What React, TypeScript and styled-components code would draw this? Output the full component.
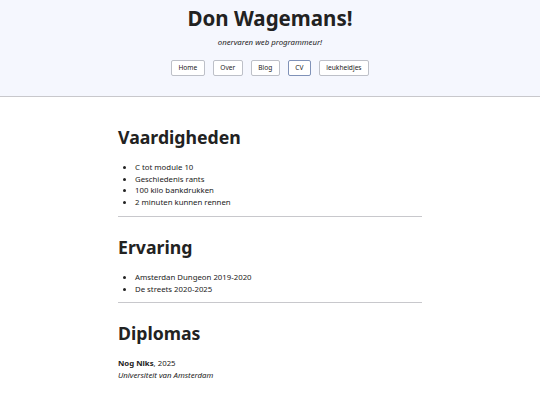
import React from "react";
import styled, { createGlobalStyle } from "styled-components";

const Global = createGlobalStyle`
  body {
    margin: 0;
    background: #ffffff;
    color: #222222;
    font-family: "Noto Sans", "DejaVu Sans", sans-serif;
  }
`;

const Header = styled.header`
  background: #f5f7fe;
  border-bottom: 1px solid #c8c8cc;
  text-align: center;
  padding: 3px 0 20px;
`;

const Title = styled.h1`
  margin: 0;
  font-size: 20.5px;
  font-weight: 700;
  line-height: 30px;
`;

const Subtitle = styled.p`
  margin: 3px 0 0;
  font-size: 7.8px;
  font-style: italic;
  line-height: 12px;
`;

const Nav = styled.nav`
  display: flex;
  justify-content: center;
  gap: 8px;
  margin-top: 12px;
`;

const NavButton = styled.a<{ $active?: boolean }>`
  display: inline-block;
  font-size: 6.6px;
  line-height: 14px;
  padding: 0 6.5px;
  border: 1px solid ${(p) => (p.$active ? "#8092b8" : "#bdc0c8")};
  border-radius: 2px;
  background: #ffffff;
  color: #222222;
  text-decoration: none;
`;

const Main = styled.main`
  max-width: 304px;
  margin: 0 auto;
  padding-top: 27px;
`;

const Heading = styled.h2`
  margin: 0;
  font-size: 17.7px;
  font-weight: 700;
  line-height: 26px;
`;

const List = styled.ul`
  margin: 12px 0 7px;
  padding-left: 17px;
  font-size: 7.8px;
  line-height: 11.7px;
`;

const Rule = styled.hr`
  border: 0;
  border-top: 1px solid #c8c8cc;
  margin: 0 0 17px;
`;

const Diploma = styled.div`
  margin-top: 12px;
  font-size: 7.8px;
  line-height: 11.7px;
`;

const School = styled.div`
  font-style: italic;
`;

const links = ["Home", "Over", "Blog", "CV", "leukheidjes"];

export default function App() {
  return (
    <>
      <Global />
      <Header>
        <Title>Don Wagemans!</Title>
        <Subtitle>onervaren web programmeur!</Subtitle>
        <Nav>
          {links.map((l) => (
            <NavButton key={l} href="#" $active={l === "CV"}>
              {l}
            </NavButton>
          ))}
        </Nav>
      </Header>
      <Main>
        <Heading>Vaardigheden</Heading>
        <List>
          <li>C tot module 10</li>
          <li>Geschiedenis rants</li>
          <li>100 kilo bankdrukken</li>
          <li>2 minuten kunnen rennen</li>
        </List>
        <Rule />
        <Heading>Ervaring</Heading>
        <List>
          <li>Amsterdan Dungeon 2019-2020</li>
          <li>De streets 2020-2025</li>
        </List>
        <Rule />
        <Heading>Diplomas</Heading>
        <Diploma>
          <b>Nog Niks</b>, 2025
          <School>Universiteit van Amsterdam</School>
        </Diploma>
      </Main>
    </>
  );
}
